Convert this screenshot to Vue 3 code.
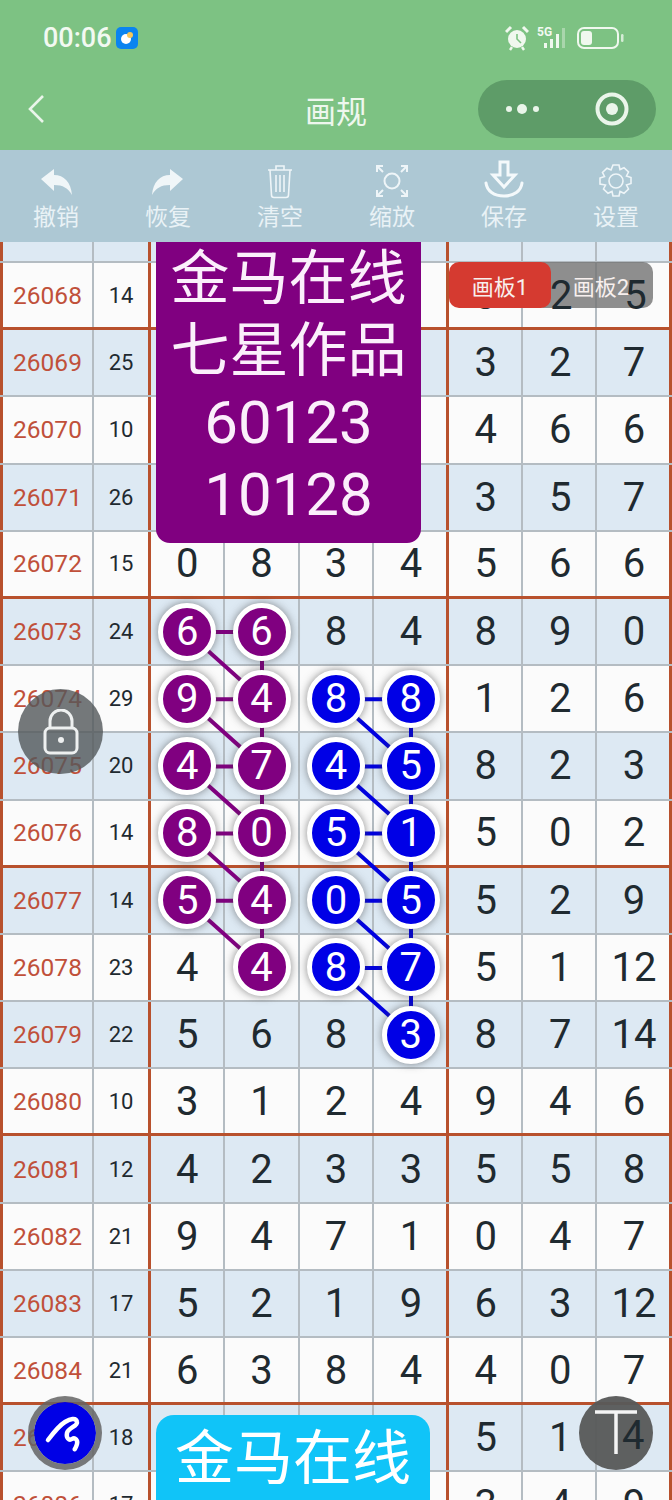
<template>
  <div class="page">
    <div class="head">
      <div class="status">
        <span class="time">00:06</span>
        <svg class="app-dot" width="22" height="22" viewBox="0 0 22 22">
          <rect width="22" height="22" rx="5" fill="#0a84f0" />
          <circle cx="10" cy="12" r="5" fill="#fff" />
          <circle cx="14" cy="8" r="3" fill="#f6c75a" />
        </svg>
        <span class="spacer"></span>
        <svg width="24" height="26" viewBox="0 0 24 26" class="alarm">
          <circle cx="12" cy="14" r="9" fill="#f0f8ef" />
          <path d="M12 9v5l4 4" stroke="#7dc283" stroke-width="1.6" fill="none" />
          <path d="M1 7l5-5M23 7l-5-5" stroke="#f0f8ef" stroke-width="3" />
          <path d="M5 25l2-3M19 25l-2-3" stroke="#f0f8ef" stroke-width="2.4" />
        </svg>
        <span class="five-g">5G</span>
        <svg width="26" height="24" viewBox="0 0 26 24" class="bars">
          <rect x="2" y="17" width="3" height="5" fill="#f0f8ef" />
          <rect x="8" y="13" width="3" height="9" fill="#f0f8ef" />
          <rect x="14" y="8" width="3" height="14" fill="#f0f8ef" />
          <rect x="20" y="2" width="3" height="20" fill="#a9d6ac" />
        </svg>
        <svg width="48" height="24" viewBox="0 0 48 24" class="battery">
          <rect x="1" y="2" width="40" height="20" rx="6" fill="none" stroke="#f0f8ef" stroke-width="2" />
          <rect x="4" y="5" width="11" height="14" rx="3" fill="#f0f8ef" />
          <rect x="44" y="8" width="2.5" height="8" rx="1.2" fill="#d5ecd6" />
        </svg>
      </div>
      <div class="nav">
        <svg class="back" width="20" height="32" viewBox="0 0 20 32">
          <path d="M17 3L4 16l13 13" fill="none" stroke="#eaf5ea" stroke-width="2.6" />
        </svg>
        <span class="title">画规</span>
        <div class="capsule">
          <svg width="40" height="14" viewBox="0 0 40 14">
            <circle cx="5" cy="7" r="3" fill="#eaf5ea" />
            <circle cx="18" cy="7" r="5" fill="#eaf5ea" />
            <circle cx="32" cy="7" r="3" fill="#eaf5ea" />
          </svg>
          <svg width="36" height="36" viewBox="0 0 36 36">
            <circle cx="18" cy="18" r="14.5" fill="none" stroke="#eaf5ea" stroke-width="4" />
            <circle cx="18" cy="18" r="6" fill="#eaf5ea" />
          </svg>
        </div>
      </div>
    </div>

    <div class="toolbar">
      <div class="tool">
        <svg width="36" height="32" viewBox="0 0 36 32">
          <path d="M3 12L16 2v6c10 0 17 7 18 20-4-7-9-10-18-10v6z" fill="#f0f6f8" />
        </svg>
        <span>撤销</span>
      </div>
      <div class="tool">
        <svg width="36" height="32" viewBox="0 0 36 32">
          <path d="M33 12L20 2v6C10 8 3 15 2 28c4-7 9-10 18-10v6z" fill="#f0f6f8" />
        </svg>
        <span>恢复</span>
      </div>
      <div class="tool">
        <svg width="36" height="36" viewBox="0 0 36 36" fill="none" stroke="#eef5f8" stroke-width="1.6">
          <path d="M6 7h24M14 7V3h8v4M8 7l1.5 25c0 1.500 1 2.500 2.500 2.500h12c1.500 0 2.500-1 2.500-2.500L28 7" />
          <path d="M14 12v17M18 12v17M22 12v17" />
        </svg>
        <span>清空</span>
      </div>
      <div class="tool">
        <svg width="36" height="36" viewBox="0 0 36 36" fill="none" stroke="#eef5f8" stroke-width="2">
          <circle cx="18" cy="18" r="7.500" />
          <path d="M3 9V3h6M3 3l6 6M33 9V3h-6M33 3l-6 6M3 27v6h6M3 33l6-6M33 27v6h-6M33 33l-6-6" />
        </svg>
        <span>缩放</span>
      </div>
      <div class="tool">
        <svg width="42" height="40" viewBox="0 0 42 40" fill="none" stroke="#f4f9fb" stroke-width="3">
          <path d="M17 3h8v13h7L21 28 10 16h7z" />
          <path d="M3 24c1 8 8 13 18 13s17-5 18-13" stroke-linecap="round" />
        </svg>
        <span>保存</span>
      </div>
      <div class="tool">
        <svg width="36" height="36" viewBox="0 0 36 36" fill="none" stroke="#eef5f8" stroke-width="1.600">
          <circle cx="18" cy="18" r="7" />
          <path d="M15 2h6l1 4.500 4-1.800 4.500 4.300-2 4 4.500 1.500v6l-4.500 1.500 2 4-4.500 4.300-4-1.800-1 4.500h-6l-1-4.500-4 1.800-4.500-4.300 2-4L2 21v-6l4.500-1.500-2-4L9 5.200l4 1.800z" />
        </svg>
        <span>设置</span>
      </div>
    </div>

    <div class="board">
      <div class="row row-top">
        <div v-for="n in 9" :key="n" class="cell" :class="cellClass(n - 1)"></div>
      </div>
      <div
        v-for="(row, i) in rows"
        :key="row.id"
        class="row"
        :class="{ striped: i % 2 === 1, fifth: isFifth(row.id) }"
      >
        <div class="cell issue" :class="cellClass(0)">{{ row.id }}</div>
        <div class="cell sum" :class="cellClass(1)">{{ row.sum }}</div>
        <div
          v-for="(v, j) in row.nums"
          :key="j"
          class="cell num"
          :class="[cellClass(j + 2), { nudged: j >= 3 }]"
        >
          <span v-if="ballAt(i, j)" class="ball" :class="ballAt(i, j)">{{ v }}</span>
          <template v-else>{{ v }}</template>
        </div>
      </div>

      <svg class="links" width="672" height="1258" viewBox="0 0 672 1258">
        <line
          v-for="(l, i) in links"
          :key="i"
          :x1="l.x1"
          :y1="l.y1"
          :x2="l.x2"
          :y2="l.y2"
          :stroke="l.color"
          stroke-width="4"
        />
      </svg>

      <div class="banner banner-purple">
        <div class="banner-cn">金马在线</div>
        <div class="banner-cn">七星作品</div>
        <div>60123</div>
        <div>10128</div>
      </div>
      <div class="banner banner-cyan">
        <div class="banner-cn">金马在线</div>
      </div>

      <div class="tabs">
        <span class="tab tab-gray">画板2</span>
        <span class="tab tab-red">画板1</span>
      </div>
      <div class="tabs-top">
        <span>2</span>
        <span>5</span>
      </div>

      <div class="fab lock">
        <svg width="36" height="46" viewBox="0 0 36 46" fill="none" stroke="#eef0f0" stroke-width="3">
          <path d="M7 19v-7a11 11 0 0 1 22 0v7" />
          <rect x="2" y="19" width="32" height="25" rx="5" />
          <circle cx="18" cy="31" r="3" fill="#eef0f0" stroke="none" />
        </svg>
      </div>
      <div class="fab pen">
        <svg width="44" height="40" viewBox="0 0 44 40" fill="none" stroke="#fff" stroke-width="4.500" stroke-linecap="round" stroke-linejoin="round">
          <path d="M5 27C11 19 17 12 22 9c5-3 11-5 12 0 1 4-9 6-10 11-1 5 2 8 5 6 3-2 6 1 5 5-1 4-3 6-2 5" />
        </svg>
      </div>
      <div class="fab text-btn">
        <svg width="44" height="46" viewBox="0 0 44 46" fill="none" stroke="#f4f4f4" stroke-width="3.500">
          <path d="M1 2h42M22 2v42" />
        </svg>
        <span class="btn-digit">4</span>
      </div>
    </div>
  </div>
</template>

<script setup>
import { computed } from 'vue'

const raw = [
  [26068, 14, ['', '', '', '', 3, '', '']],
  [26069, 25, ['', '', '', '', 3, 2, 7]],
  [26070, 10, ['', '', '', '', 4, 6, 6]],
  [26071, 26, ['', '', '', '', 3, 5, 7]],
  [26072, 15, [0, 8, 3, 4, 5, 6, 6]],
  [26073, 24, [6, 6, 8, 4, 8, 9, 0]],
  [26074, 29, [9, 4, 8, 8, 1, 2, 6]],
  [26075, 20, [4, 7, 4, 5, 8, 2, 3]],
  [26076, 14, [8, 0, 5, 1, 5, 0, 2]],
  [26077, 14, [5, 4, 0, 5, 5, 2, 9]],
  [26078, 23, [4, 4, 8, 7, 5, 1, 12]],
  [26079, 22, [5, 6, 8, 3, 8, 7, 14]],
  [26080, 10, [3, 1, 2, 4, 9, 4, 6]],
  [26081, 12, [4, 2, 3, 3, 5, 5, 8]],
  [26082, 21, [9, 4, 7, 1, 0, 4, 7]],
  [26083, 17, [5, 2, 1, 9, 6, 3, 12]],
  [26084, 21, [6, 3, 8, 4, 4, 0, 7]],
  [26085, 18, ['', '', '', '', 5, 1, '']],
  [26086, 17, ['', '', '', '', 3, 4, 9]]
]

const rows = raw.map(([id, sum, nums]) => ({ id, sum, nums }))

// [row index, column index] of the drawn balls, by colour
const purple = [
  [5, 0], [5, 1], [6, 0], [6, 1], [7, 0], [7, 1], [8, 0], [8, 1], [9, 0], [9, 1], [10, 1]
]
const blue = [
  [6, 2], [6, 3], [7, 2], [7, 3], [8, 2], [8, 3], [9, 2], [9, 3], [10, 2], [10, 3], [11, 3]
]

const ballAt = (r, c) => {
  if (purple.some(b => b[0] === r && b[1] === c)) return 'purple'
  if (blue.some(b => b[0] === r && b[1] === c)) return 'blue'
  return ''
}

const colX = [187, 262, 336, 411]
const rowY = (r) => 21 + 67.2 * r + 33

const linksFor = (balls, color) => {
  const out = []
  const has = (r, c) => balls.some(b => b[0] === r && b[1] === c)
  const left = Math.min(...balls.map(b => b[1]))
  balls.forEach(([r, c]) => {
    const push = (r2, c2) => out.push({ x1: colX[c], y1: rowY(r), x2: colX[c2], y2: rowY(r2), color })
    if (c === left && has(r, c + 1)) push(r, c + 1)
    if (c === left && has(r + 1, c + 1)) push(r + 1, c + 1)
    if (c === left + 1 && has(r + 1, c)) push(r + 1, c)
  })
  return out
}

const links = computed(() => [...linksFor(purple, '#800080'), ...linksFor(blue, '#0000e0')])

const isFifth = (id) => (id - 26068) % 4 === 0

const cellClass = (n) => ({
  'edge-left': n === 0,
  'edge-right': n === 1 || n === 5 || n === 8
})
</script>

<style>
html, body {
  margin: 0;
  background: #fbfbfb;
}
</style>

<style scoped>
.page {
  width: 672px;
  height: 1500px;
  overflow: hidden;
  font-family: Roboto, "Noto Sans CJK SC", sans-serif;
  color: #1f2a30;
}

.head {
  height: 150px;
  background: #7dc283;
}

.status {
  height: 76px;
  display: flex;
  align-items: center;
  padding: 0 47px 0 43px;
  box-sizing: border-box;
  color: #f2f9f1;
}

.time {
  font-size: 27px;
  font-weight: 500;
  width: 73px;
}

.app-dot {
  flex: none;
}

.spacer {
  flex: 1;
}

.five-g {
  font-size: 12px;
  font-weight: 700;
  margin: 0 -11px 12px 8px;
  width: 16px;
}

.battery {
  margin-left: 9px;
}

.nav {
  height: 74px;
  display: flex;
  align-items: center;
  position: relative;
  padding: 0 16px 0 26px;
  margin-top: -4px;
  justify-content: space-between;
}

.title {
  position: absolute;
  left: 0;
  right: 0;
  text-align: center;
  font-size: 31px;
  color: #eef7ee;
}

.capsule {
  width: 178px;
  height: 58px;
  border-radius: 29px;
  background: #5e9c68;
  display: flex;
  align-items: center;
  box-sizing: border-box;
  padding: 0 26px;
  justify-content: space-between;
}

.toolbar {
  height: 92px;
  background: #adc8d4;
  display: grid;
  grid-template-columns: repeat(6, 112px);
}

.tool {
  display: flex;
  flex-direction: column;
  align-items: center;
  justify-content: flex-end;
  padding-bottom: 9px;
  font-size: 23px;
  line-height: 30px;
  color: #e9f2f6;
}

.tool svg {
  margin-bottom: 4px;
}

.board {
  position: relative;
  height: 1258px;
  overflow: hidden;
}

.row {
  display: grid;
  grid-template-columns: 94px 57px repeat(7, 74.4px);
  height: 67.2px;
  background: #fbfbfb;
  box-sizing: border-box;
  border-bottom: 2px solid #b4bcc2;
}

.row-top,
.striped {
  background: #dde9f3;
}

.row-top {
  height: 21px;
}

.fifth {
  border-bottom: 3px solid #b8512d;
}

.cell {
  position: relative;
  display: flex;
  align-items: center;
  justify-content: center;
  box-sizing: border-box;
  border-right: 2px solid #b4bcc2;
}

.edge-left {
  border-left: 3px solid #b8512d;
}

.edge-right {
  border-right: 3px solid #b8512d;
}

.issue {
  font-size: 24.5px;
  color: #c0503a;
}

.sum {
  font-size: 22px;
}

.num {
  font-size: 40px;
}

.nudged {
  padding-left: 2px;
}

.ball {
  position: relative;
  z-index: 2;
  width: 48px;
  height: 48px;
  flex: none;
  display: flex;
  align-items: center;
  justify-content: center;
  border-radius: 50%;
  border: 5px solid #fff;
  box-shadow: 0 0 8px rgba(60, 60, 60, 0.6);
  color: #fff;
}

.purple {
  background: #800080;
}

.blue {
  background: #0000e6;
}

.links {
  position: absolute;
  left: 0;
  top: 0;
  z-index: 1;
}

.banner {
  position: absolute;
  z-index: 3;
  left: 156px;
  color: #fbeffb;
  text-align: center;
  font-size: 60px;
  line-height: 72px;
}

.banner-cn {
  font-size: 59px;
}

.banner-purple {
  top: 0;
  width: 265px;
  height: 301px;
  background: #800080;
  border-radius: 0 0 14px 14px;
  box-sizing: border-box;
  padding-top: 1px;
}

.banner-cyan {
  top: 1173px;
  width: 274px;
  height: 110px;
  background: #10c4f8;
  border-radius: 18px;
  padding-top: 8px;
  color: #fff;
}

.tabs {
  position: absolute;
  z-index: 3;
  left: 449px;
  top: 20px;
  width: 204px;
  height: 46px;
  font-size: 22px;
  color: #f8f0ee;
}

.tab {
  position: absolute;
  top: 0;
  height: 46px;
  display: flex;
  align-items: center;
  justify-content: center;
  border-radius: 10px;
}

.tab-red {
  left: 0;
  width: 102px;
  background: #d53a30;
}

.tab-gray {
  left: 84px;
  width: 120px;
  padding-left: 16px;
  box-sizing: border-box;
  background: rgba(115, 115, 115, 0.8);
}

.tabs-top {
  position: absolute;
  z-index: 3;
  left: 524px;
  top: 21px;
  height: 65px;
  display: grid;
  grid-template-columns: repeat(2, 74.4px);
  align-items: center;
  text-align: center;
  font-size: 40px;
  pointer-events: none;
}

.fab {
  position: absolute;
  z-index: 4;
  border-radius: 50%;
  display: flex;
  align-items: center;
  justify-content: center;
  box-sizing: border-box;
}

.lock {
  left: 18px;
  top: 447px;
  width: 85px;
  height: 85px;
  background: rgba(82, 88, 90, 0.8);
}

.pen {
  left: 28px;
  top: 1154px;
  width: 74px;
  height: 74px;
  background: #0000e6;
  background-clip: padding-box;
  border: 6px solid rgba(100, 100, 100, 0.85);
}

.text-btn {
  left: 579px;
  top: 1154px;
  width: 74px;
  height: 74px;
  background: rgba(88, 90, 90, 0.96);
}

.btn-digit {
  position: absolute;
  left: 43px;
  top: 16px;
  font-size: 40px;
  line-height: 47px;
  color: #1f2a30;
}
</style>
